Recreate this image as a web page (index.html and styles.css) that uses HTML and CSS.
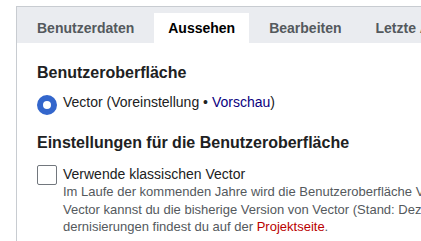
FILE: index.html
```html
<!DOCTYPE html>
<html lang="de">
<head>
<meta charset="utf-8">
<link rel="stylesheet" href="styles.css">
</head>
<body>
<div class="prefs">
  <div class="tabs">
    <div class="tab">Benutzerdaten</div>
    <div class="tab active">Aussehen</div>
    <div class="tab">Bearbeiten</div>
    <div class="tab">Letzte Änderungen</div>
  </div>
  <div class="panel">
    <h2 class="heading">Benutzeroberfläche</h2>
    <div class="option radio-row">
      <span class="radio"></span>
      <span class="label">Vector (Voreinstellung • <a class="link" href="#">Vorschau</a>)</span>
    </div>
    <h2 class="heading heading-second">Einstellungen für die Benutzeroberfläche</h2>
    <div class="option check-row">
      <span class="checkbox"></span>
      <div class="check-text">
        <div class="label">Verwende klassischen Vector</div>
        <p class="help">Im Laufe der kommenden Jahre wird die Benutzeroberfläche Vector schrittweise modernisiert. Mit dem klassischen<br>Vector kannst du die bisherige Version von Vector (Stand: Dezember 2019) verwenden. Mehr über die Mo-<br>dernisierungen findest du auf der <a class="redlink" href="#">Projektseite</a>.</p>
      </div>
    </div>
  </div>
</div>
</body>
</html>
```
FILE: styles.css
```css
html, body {
  margin: 0;
  padding: 0;
  background: #ffffff;
  overflow: hidden;
}
body {
  font-family: "Liberation Sans", Arial, sans-serif;
  color: #202122;
}
.prefs {
  margin: 6px 0 0 16px;
  border-top: 1px solid #c8ccd1;
  border-left: 1px solid #c8ccd1;
  min-height: 240px;
}
.tabs {
  display: flex;
  gap: 6px;
  padding: 6px 6px 0 6px;
  background: #eaecf0;
  height: 30px;
  white-space: nowrap;
}
.tab {
  flex: none;
  padding: 0 14px;
  height: 30px;
  line-height: 30px;
  font-size: 14px;
  font-weight: bold;
  color: #54595d;
}
.tab.active {
  background: #ffffff;
  color: #000000;
}
.panel {
  padding: 20px 0 0 20px;
}
.heading {
  margin: 0;
  font-size: 16px;
  line-height: 20px;
  font-weight: bold;
  color: #202122;
  white-space: nowrap;
}
.heading-second {
  margin-top: 18px;
}
.option {
  display: flex;
  gap: 6px;
  white-space: nowrap;
}
.radio-row {
  margin-top: 9px;
  font-size: 14px;
  line-height: 20px;
}
.radio {
  flex: none;
  box-sizing: border-box;
  width: 20px;
  height: 20px;
  margin-top: 3px;
  border: 6px solid #3366cc;
  border-radius: 50%;
  background: #ffffff;
}
.link {
  color: #0b0080;
  text-decoration: none;
}
.check-row {
  margin-top: 12px;
}
.checkbox {
  flex: none;
  box-sizing: border-box;
  width: 20px;
  height: 20px;
  border: 1px solid #72777d;
  border-radius: 2px;
  background: #ffffff;
}
.check-text .label {
  font-size: 14px;
  line-height: 18px;
  color: #202122;
}
.help {
  margin: 0;
  font-size: 13px;
  line-height: 17.6px;
  color: #54595d;
}
.redlink {
  color: #ba0000;
  text-decoration: none;
}
```
